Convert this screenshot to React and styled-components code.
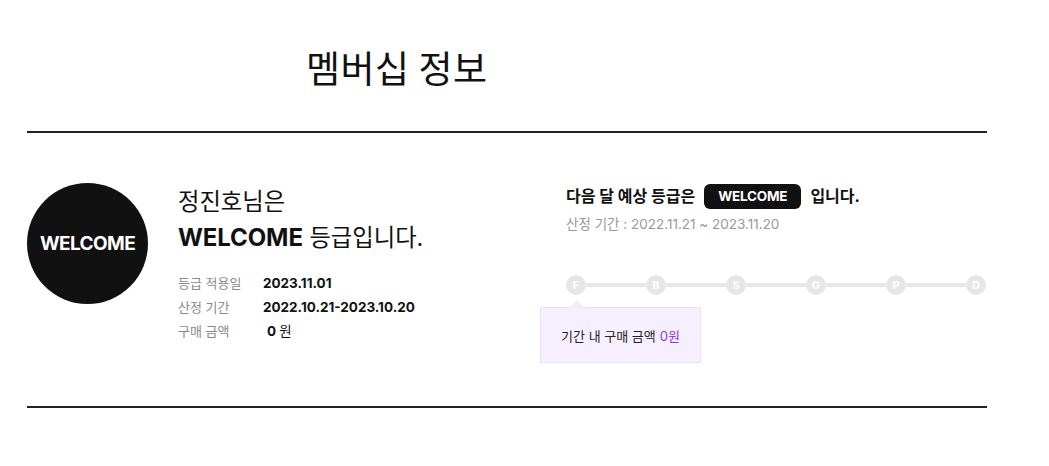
import React from "react";
import styled, { createGlobalStyle } from "styled-components";

const GlobalStyle = createGlobalStyle`
  body {
    margin: 0;
    background: #fff;
    font-family: Inter, "Noto Sans CJK KR", "Noto Sans", sans-serif;
    color: #111;
  }
`;

const Page = styled.div`
  width: 960px;
  padding-left: 27px;
`;

const Header = styled.header`
  height: 133px;
  border-bottom: 2px solid #222;
  box-sizing: border-box;
  padding: 41px 0 0 279px;
`;

const Title = styled.h1`
  margin: 0;
  font-family: "Noto Sans CJK KR", sans-serif;
  font-weight: 400;
  font-size: 37px;
  line-height: 52px;
  letter-spacing: 0.5px;
  color: #111;
`;

const Body = styled.section`
  display: flex;
  height: 275px;
  box-sizing: border-box;
  padding-top: 50px;
  border-bottom: 2px solid #222;
`;

const Left = styled.div`
  display: flex;
  width: 539px;
  gap: 30px;
`;

const Badge = styled.div`
  width: 121px;
  height: 121px;
  border-radius: 50%;
  background: #111;
  color: #fff;
  display: flex;
  align-items: center;
  justify-content: center;
  font-weight: 700;
  font-size: 19px;
  letter-spacing: -0.6px;
`;

const Info = styled.div`
  padding-top: 1px;
`;

const Greeting = styled.p`
  margin: 0;
  font-size: 23.3px;
  line-height: 36px;
  font-weight: 400;
  color: #111;
  b {
    font-weight: 700;
    font-size: 24px;
    letter-spacing: -0.1px;
  }
`;

const Rows = styled.dl`
  margin: 18px 0 0;
  display: grid;
  grid-template-columns: 85px auto;
  row-gap: 6px;
  font-size: 13.5px;
  line-height: 18px;
`;

const Label = styled.dt`
  color: #8a8a8a;
  font-size: 13px;
`;

const Value = styled.dd`
  margin: 0;
  font-weight: 700;
  color: #111;
  padding-left: ${(p) => p.$indent || 0}px;
  span {
    font-weight: 400;
  }
`;

const Right = styled.div`
  width: 420px;
  padding-top: 0;
`;

const Next = styled.p`
  margin: 0;
  display: flex;
  align-items: center;
  font-size: 16px;
  font-weight: 700;
  line-height: 26px;
`;

const Chip = styled.span`
  display: inline-block;
  margin: 0 9px 0 9px;
  padding: 0 14px;
  height: 25px;
  line-height: 25px;
  border-radius: 6px;
  background: #111;
  color: #fff;
  font-size: 13.5px;
  font-weight: 700;
  letter-spacing: -0.2px;
`;

const Period = styled.p`
  margin: 5px 0 0;
  font-size: 13.5px;
  color: #999;
  line-height: 20px;
`;

const Track = styled.div`
  position: relative;
  margin-top: 41px;
  display: flex;
  align-items: center;
`;

const Step = styled.span`
  width: 20px;
  height: 20px;
  flex: none;
  border-radius: 50%;
  background: #e6e6e6;
  color: #fff;
  font-size: 11px;
  font-weight: 700;
  display: flex;
  align-items: center;
  justify-content: center;
`;

const Link = styled.span`
  flex: 1;
  height: 4px;
  background: #e6e6e6;
`;

const Tip = styled.div`
  position: absolute;
  top: 32px;
  left: -26px;
  width: 161px;
  height: 56px;
  box-sizing: border-box;
  background: #f6efff;
  border: 1px solid #ecdffd;
  display: flex;
  align-items: center;
  justify-content: center;
  font-size: 13px;
  color: #222;
  &::before {
    content: "";
    position: absolute;
    top: -8px;
    left: 29px;
    border-left: 7px solid transparent;
    border-right: 7px solid transparent;
    border-bottom: 8px solid #f3ebfd;
  }
  em {
    font-style: normal;
    color: #7d3ce8;
    margin-left: 4px;
  }
`;

const steps = ["F", "B", "S", "G", "P", "D"];

export default function App() {
  return (
    <Page>
      <GlobalStyle />
      <Header>
        <Title>멤버십 정보</Title>
      </Header>
      <Body>
        <Left>
          <Badge>WELCOME</Badge>
          <Info>
            <Greeting>정진호님은</Greeting>
            <Greeting>
              <b>WELCOME</b> 등급입니다.
            </Greeting>
            <Rows>
              <Label>등급 적용일</Label>
              <Value>2023.11.01</Value>
              <Label>산정 기간</Label>
              <Value>2022.10.21-2023.10.20</Value>
              <Label>구매 금액</Label>
              <Value $indent={4}>
                0 <span>원</span>
              </Value>
            </Rows>
          </Info>
        </Left>
        <Right>
          <Next>
            다음 달 예상 등급은 <Chip>WELCOME</Chip> 입니다.
          </Next>
          <Period>산정 기간 : 2022.11.21 ~ 2023.11.20</Period>
          <Track>
            {steps.map((s, i) => (
              <React.Fragment key={s}>
                {i > 0 && <Link />}
                <Step>{s}</Step>
              </React.Fragment>
            ))}
            <Tip>
              기간 내 구매 금액<em>0원</em>
            </Tip>
          </Track>
        </Right>
      </Body>
    </Page>
  );
}
